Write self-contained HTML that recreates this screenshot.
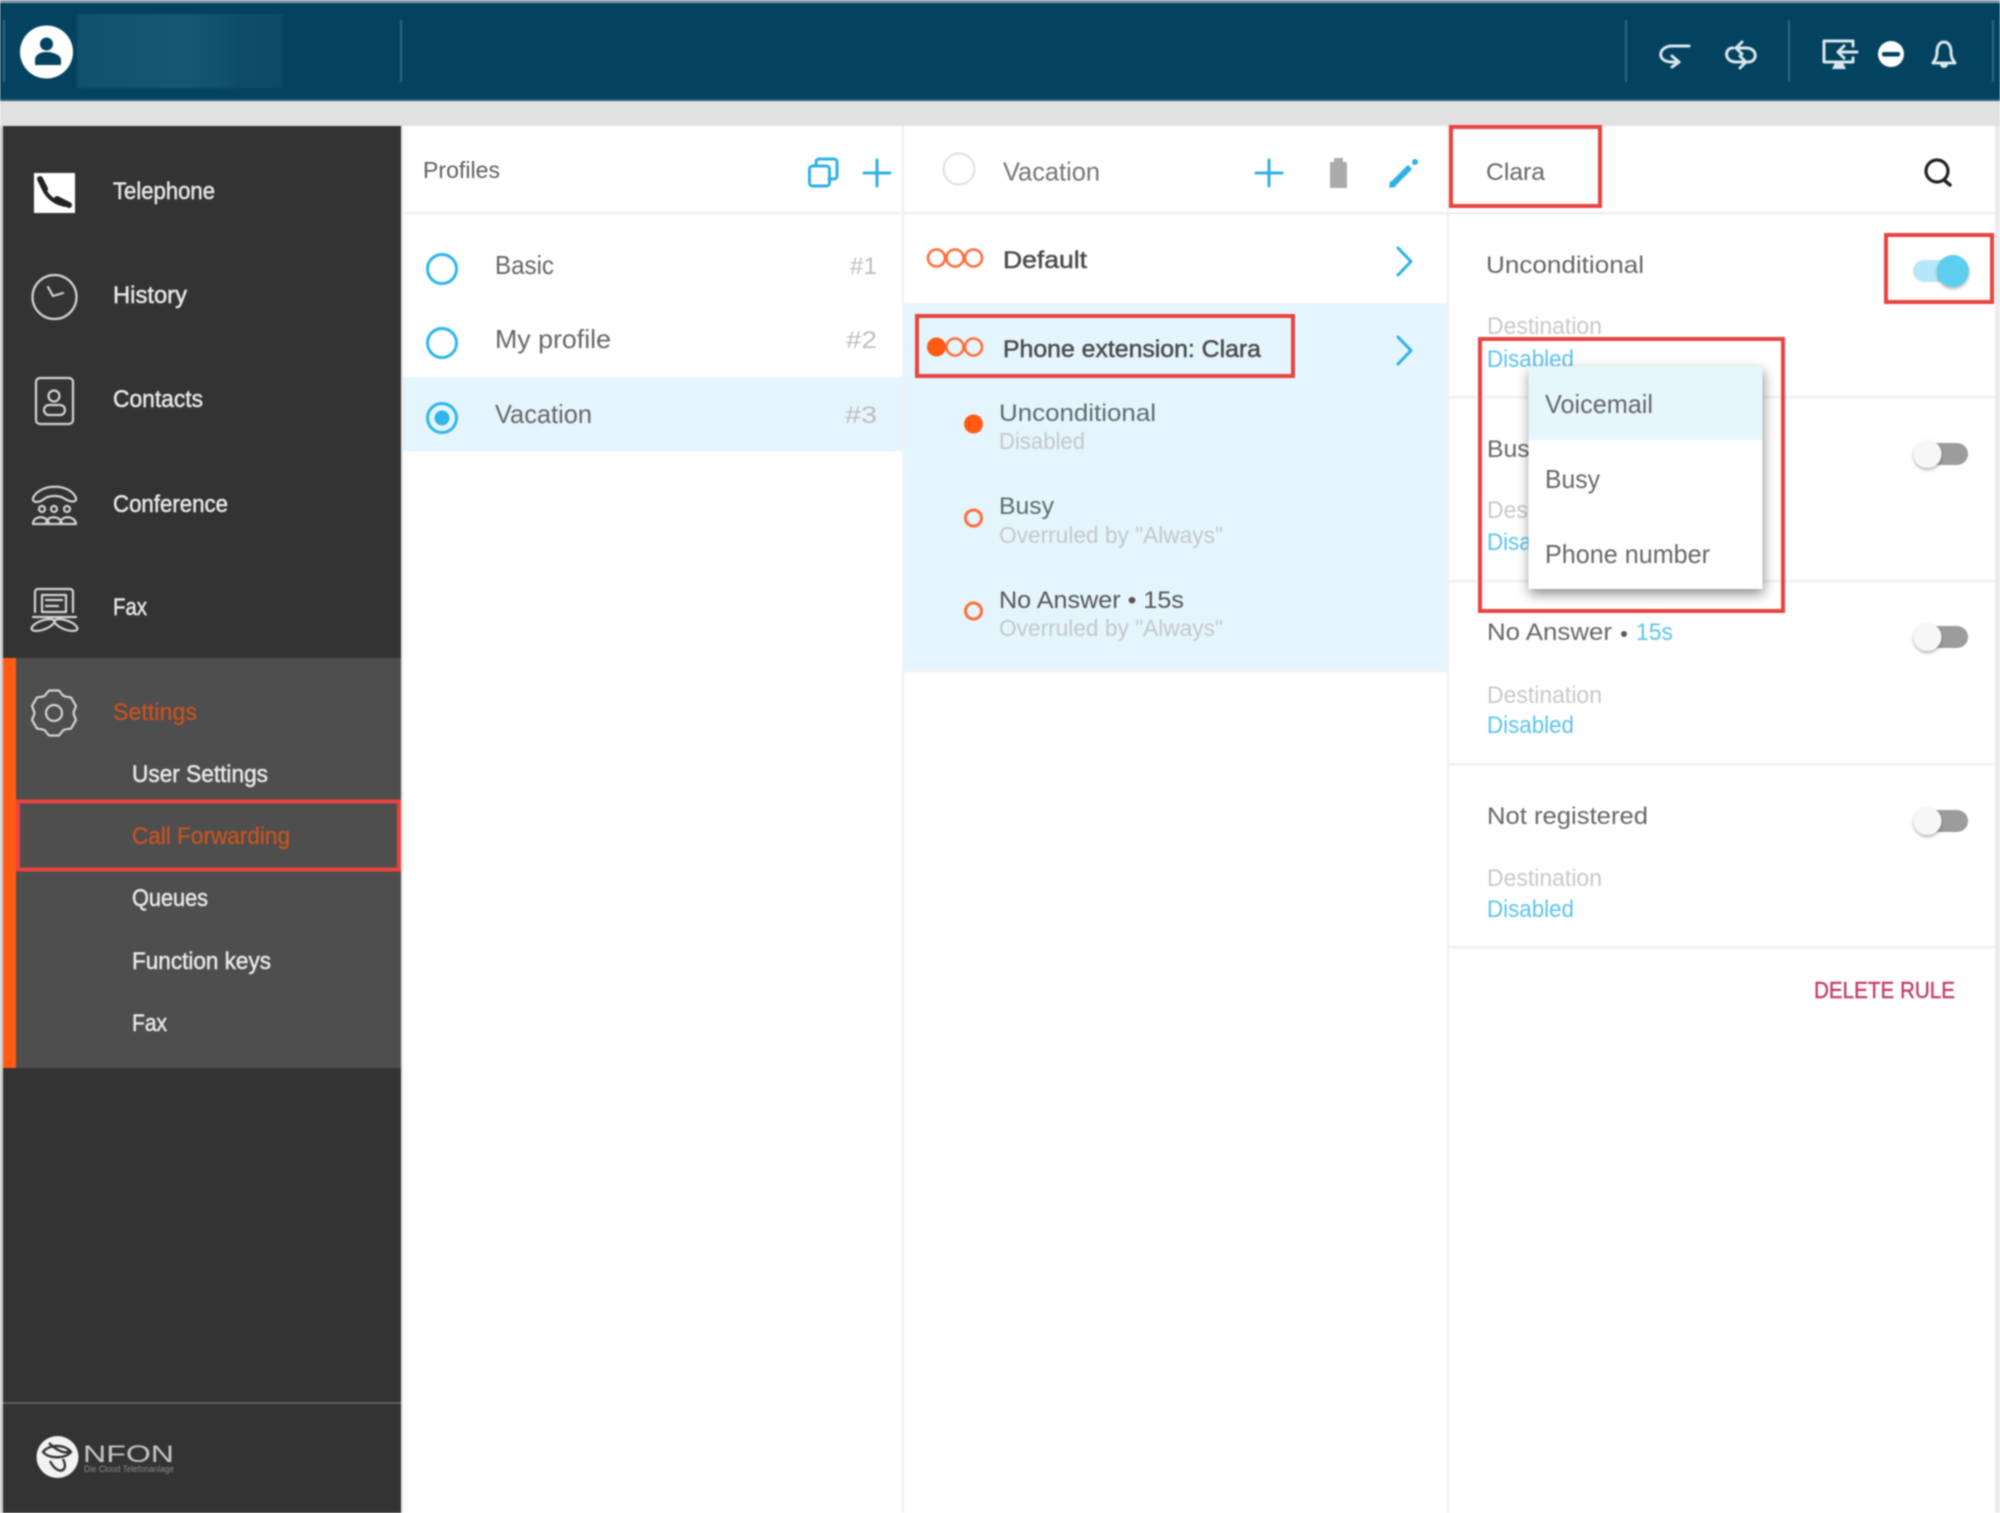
<!DOCTYPE html>
<html lang="en"><head><meta charset="utf-8"><title>Call Forwarding</title>
<style>
html,body{margin:0;padding:0;width:2000px;height:1513px;overflow:hidden;background:#fff}
svg{display:block;filter:blur(.8px)}
text{font-family:"Liberation Sans",sans-serif;font-size:24.500px;fill:#666}
.n{fill:#e8e8e8;stroke:#e8e8e8;stroke-width:.5px}
.o{fill:#c9531f;stroke:#c9531f;stroke-width:.3px}
.s{font-size:23.500px;fill:#c3c8ca}
.g{fill:#bdbdbd}
.b{fill:#5bc3ec}
.k{fill:#4a4a4a;stroke:#4a4a4a;stroke-width:.5px}
.ic{fill:none;stroke:#d4d4d4;stroke-width:2.2;stroke-linecap:round;stroke-linejoin:round}
.hd{fill:none;stroke:#d9e6ec;stroke-width:3;stroke-linecap:round;stroke-linejoin:round}
.bl{fill:none;stroke:#2fb0e6;stroke-width:3;stroke-linecap:round;stroke-linejoin:round}
.or{fill:none;stroke:#ff6d3a;stroke-width:2.6}
.red{fill:none;stroke:#e8433f;stroke-width:4}
.ln{fill:#f0f0f0}
</style></head><body>
<svg width="2000" height="1513" viewBox="0 0 2000 1513" xmlns="http://www.w3.org/2000/svg">
<defs>
<linearGradient id="bg" x1="0" x2="1" y1="0" y2="0"><stop offset="0" stop-color="#0f506b"/><stop offset=".1" stop-color="#12536d"/><stop offset=".55" stop-color="#155771"/><stop offset=".8" stop-color="#0c4c66"/><stop offset="1" stop-color="#0a4a64"/></linearGradient>
<filter id="ms" x="-20%" y="-20%" width="140%" height="140%"><feDropShadow dx="1" dy="5" stdDeviation="6" flood-color="#000" flood-opacity=".45"/></filter>
<filter id="ks" x="-50%" y="-50%" width="200%" height="200%"><feDropShadow dx="0" dy="2" stdDeviation="1.5" flood-color="#000" flood-opacity=".3"/></filter>
</defs>
<rect width="2000" height="1513" fill="#fff"/>
<!-- top bar -->
<rect width="2000" height="101" fill="#04435f"/>
<rect width="2000" height="3" fill="#7f9aa8"/>
<rect y="99" width="2000" height="2" fill="#2a6078"/>
<rect y="101" width="2000" height="25" fill="#e1e1e1"/>
<rect x="3" y="20" width="2" height="62" fill="#2d6780"/>
<rect x="400" y="20" width="2" height="62" fill="#2d6780"/>
<rect x="1625" y="20" width="2" height="62" fill="#2d6780"/>
<rect x="1788" y="20" width="2" height="62" fill="#2d6780"/>
<rect x="1992" y="20" width="2" height="62" fill="#2d6780"/>
<rect x="77" y="14" width="206" height="74" fill="url(#bg)"/>
<circle cx="46.500" cy="52" r="26.500" fill="#fff"/>
<circle cx="46.500" cy="44" r="6.500" fill="#04435f"/>
<path d="M35 65v-5c0-5 5-8 11.500-8s14.500 3 14.500 8v5z" fill="#04435f"/>
<path class="hd" d="M1689 46H1672C1658 46 1656 62 1672 62H1679M1672 56L1679 62L1672 67"/>
<path class="hd" d="M1736 48H1746C1758 48 1758 62 1748 62M1746 62H1736C1724 62 1724 48 1733 48M1742 42L1736 48L1742 54M1740 56L1746 62L1740 68"/>
<path class="hd" d="M1853 46V41H1824V62H1853V58M1857 52H1838M1844 46L1838 52L1844 58"/>
<path d="M1832 69h14l-3-6h-8z" fill="#d9e6ec"/>
<circle cx="1891" cy="54" r="13" fill="#fff"/>
<rect x="1882" y="52" width="18" height="4.500" rx="2" fill="#04435f"/>
<path d="M1944 42c-5 0-7 5-7 10c0 6-2 8-4 11h22c-2-3-4-5-4-11c0-5-2-10-7-10z" class="hd"/>
<path d="M1940 64a4 4 0 0 0 8 0z" fill="#d9e6ec"/>

<!-- right strip, left strip -->
<rect x="1995" y="126" width="5" height="1387" fill="#ececec"/>
<rect x="0" y="126" width="3" height="1387" fill="#cfcfcf"/>
<!-- sidebar -->
<rect x="3" y="126" width="398" height="1387" fill="#333"/>
<rect x="401" y="126" width="2" height="1387" fill="#e6e6e6"/>
<rect x="3" y="658" width="398" height="410" fill="#4e4e4e"/>
<rect x="3" y="658" width="13" height="410" fill="#ff5a14"/>
<rect x="3" y="1402" width="398" height="2" fill="#5f5f5f"/>

<rect x="34" y="173" width="41" height="40" fill="#fff"/>
<path d="M42 180C42 192 52 203 66 205" fill="none" stroke="#222" stroke-width="4"/>
<path d="M40 179L45 189M57 199L69 205" fill="none" stroke="#222" stroke-width="6" stroke-linecap="round"/>
<text class="n" x="113" y="199" textLength="102" lengthAdjust="spacingAndGlyphs">Telephone</text>

<circle class="ic" cx="54.500" cy="297" r="22"/>
<path class="ic" d="M48 287L53 296L63 293"/>
<text class="n" x="113" y="303" textLength="74" lengthAdjust="spacingAndGlyphs">History</text>

<rect class="ic" x="36" y="378" width="37" height="46" rx="4"/>
<circle class="ic" cx="54" cy="396" r="5.500"/>
<rect class="ic" x="44" y="405" width="21" height="10" rx="5"/>
<text class="n" x="113" y="407" textLength="90" lengthAdjust="spacingAndGlyphs">Contacts</text>

<path class="ic" d="M33 498C40 483 70 483 76 498C77 503 70 502 65 499C60 495 49 495 44 499C39 503 32 503 33 498Z"/>
<circle class="ic" cx="42" cy="509" r="3"/><circle class="ic" cx="54" cy="509" r="3"/><circle class="ic" cx="67" cy="509" r="3"/>
<path class="ic" d="M33 524c0-9 15-9 16 0zM46 524c0-9 15-9 16 0zM60 524c0-9 15-9 16 0z"/>
<text class="n" x="113" y="512" textLength="115" lengthAdjust="spacingAndGlyphs">Conference</text>

<path class="ic" d="M35 612V592a3 3 0 0 1 3-3H70a3 3 0 0 1 3 3V612M42 612H66V595H42ZM46 600H62M46 606H58M33 617H76"/>
<ellipse class="ic" cx="43" cy="625" rx="12" ry="4.500" transform="rotate(-20 43 625)"/>
<ellipse class="ic" cx="66" cy="625" rx="12" ry="4.500" transform="rotate(20 66 625)"/>
<text class="n" x="113" y="615" textLength="34" lengthAdjust="spacingAndGlyphs">Fax</text>

<g transform="translate(54 713)">
<polygon class="ic" points="-9,-17.500 -5,-22.500 5,-22.500 9,-17.500 10.660,-16.540 16.990,-15.580 21.990,-6.920 19.660,-0.960 19.650,0.960 21.990,6.920 16.990,15.580 10.660,16.550 9,17.500 5,22.500 -5,22.500 -9,17.500 -10.660,16.540 -16.990,15.580 -21.990,6.920 -19.660,0.960 -19.650,-0.960 -21.990,-6.920 -16.990,-15.580 -10.660,-16.550"/>
<circle class="ic" r="8"/>
</g>
<text class="o" x="113" y="720" textLength="84" lengthAdjust="spacingAndGlyphs">Settings</text>
<text class="n" x="132" y="782" textLength="136" lengthAdjust="spacingAndGlyphs">User Settings</text>
<rect class="red" x="18" y="801.500" width="381" height="68"/>
<text class="o" x="132" y="844" textLength="158" lengthAdjust="spacingAndGlyphs">Call Forwarding</text>
<text class="n" x="132" y="906" textLength="76" lengthAdjust="spacingAndGlyphs">Queues</text>
<text class="n" x="132" y="969" textLength="139" lengthAdjust="spacingAndGlyphs">Function keys</text>
<text class="n" x="132" y="1031" textLength="35" lengthAdjust="spacingAndGlyphs">Fax</text>

<circle cx="57.500" cy="1457" r="21" fill="#f2f2f2"/>
<path d="M43 1452c6-8 22-8 28 0c-6 7-22 7-28 0zM49 1443c6 6 16 12 20 8M50 1461c4 8 10 12 14 8c2-3 0-8-1-10" fill="none" stroke="#333" stroke-width="2.400"/>
<text x="83" y="1462" textLength="91" lengthAdjust="spacingAndGlyphs" style="font-size:24px;fill:#c4c4c4">NFON</text>
<text x="84" y="1472" textLength="90" lengthAdjust="spacingAndGlyphs" style="font-size:9px;fill:#8a8a8a">Die Cloud Telefonanlage</text>

<!-- column dividers -->
<rect x="403" y="212" width="1592" height="2.500" class="ln"/>
<rect x="902" y="126" width="2" height="1387" class="ln"/>
<rect x="1447" y="126" width="2" height="1387" class="ln"/>

<!-- Profiles -->
<text x="423" y="178" textLength="77" lengthAdjust="spacingAndGlyphs" style="font-size:23.500px;fill:#5e5e5e">Profiles</text>
<path class="bl" d="M816 165V162a3 3 0 0 1 3-3H834a3 3 0 0 1 3 3V176a3 3 0 0 1-3 3H829"/>
<rect class="bl" x="809.500" y="166" width="20" height="20" rx="3"/>
<path class="bl" d="M877 160V186M864 173H890"/>
<rect x="403" y="377" width="499" height="74" fill="#e4f5fd"/>
<circle cx="442" cy="269" r="14.500" fill="none" stroke="#2fb6ea" stroke-width="3"/>
<circle cx="442" cy="343" r="14.500" fill="none" stroke="#2fb6ea" stroke-width="3"/>
<circle cx="442" cy="418" r="14.500" fill="none" stroke="#2fb6ea" stroke-width="3"/>
<circle cx="442" cy="418" r="7.500" fill="#2fb6ea"/>
<text x="495" y="274" textLength="59" lengthAdjust="spacingAndGlyphs" style="font-size:26px">Basic</text>
<text x="495" y="348" textLength="116" lengthAdjust="spacingAndGlyphs" style="font-size:26px">My profile</text>
<text x="495" y="423" textLength="97" lengthAdjust="spacingAndGlyphs" style="font-size:26px">Vacation</text>
<text class="g" x="850" y="274" textLength="27" lengthAdjust="spacingAndGlyphs">#1</text>
<text class="g" x="846" y="348" textLength="31" lengthAdjust="spacingAndGlyphs">#2</text>
<text class="g" x="845" y="423" textLength="32" lengthAdjust="spacingAndGlyphs">#3</text>

<!-- Rules column -->
<circle cx="959" cy="169" r="15.500" fill="none" stroke="#e6e6e6" stroke-width="2.500"/>
<text x="1003" y="180.500" textLength="97" lengthAdjust="spacingAndGlyphs" style="font-size:26px;fill:#747474">Vacation</text>
<path class="bl" d="M1269 160V186M1256 173H1282"/>
<rect x="1330" y="162" width="17" height="26" rx="1" fill="#ababab"/>
<rect x="1334" y="158" width="9" height="5" fill="#ababab"/>
<path d="M1392 185L1410 167" fill="none" stroke="#2fb0e6" stroke-width="6"/>
<path d="M1389 188l1-7l6 6z" fill="#2fb0e6"/>
<circle cx="1415" cy="162" r="3" fill="#2fb0e6"/>

<rect x="904" y="303" width="543" height="367" fill="#e4f5fd"/>
<rect x="904" y="670" width="543" height="2" fill="#f0f0f0"/>
<g class="or"><circle cx="936.500" cy="258" r="8.500"/><circle cx="955" cy="258" r="8.500"/><circle cx="973.500" cy="258" r="8.500"/></g>
<text class="k" x="1003" y="268" textLength="84" lengthAdjust="spacingAndGlyphs">Default</text>
<path class="bl" d="M1398 248L1411 261.500L1398 275"/>

<g class="or"><circle cx="955" cy="347" r="8.500"/><circle cx="973.500" cy="347" r="8.500"/></g>
<circle cx="936.500" cy="347" r="9.500" fill="#ff5a14"/>
<text class="k" x="1003" y="357" textLength="258" lengthAdjust="spacingAndGlyphs">Phone extension: Clara</text>
<path class="bl" d="M1398 337L1411 350.500L1398 364"/>
<rect class="red" x="917" y="316" width="376" height="60"/>

<circle cx="973.500" cy="424" r="9.500" fill="#ff5a14"/>
<text x="999" y="421" textLength="157" lengthAdjust="spacingAndGlyphs" style="fill:#5f6a70">Unconditional</text>
<text class="s" x="999" y="449" textLength="86" lengthAdjust="spacingAndGlyphs">Disabled</text>
<circle cx="973.500" cy="518" r="8" class="or" style="stroke-width:3"/>
<text x="999" y="514" textLength="55" lengthAdjust="spacingAndGlyphs" style="fill:#5f6a70">Busy</text>
<text class="s" x="999" y="543" textLength="224" lengthAdjust="spacingAndGlyphs">Overruled by "Always"</text>
<circle cx="973.500" cy="611" r="8" class="or" style="stroke-width:3"/>
<text x="999" y="608" textLength="185" lengthAdjust="spacingAndGlyphs" style="fill:#555">No Answer • 15s</text>
<text class="s" x="999" y="636" textLength="224" lengthAdjust="spacingAndGlyphs">Overruled by "Always"</text>

<!-- Details column -->
<text x="1486" y="180" textLength="59" lengthAdjust="spacingAndGlyphs">Clara</text>
<rect class="red" x="1451" y="127" width="149" height="79"/>
<circle cx="1937" cy="171" r="11" fill="none" stroke="#222" stroke-width="3.200"/>
<path d="M1944 180L1950 185" fill="none" stroke="#222" stroke-width="3.500" stroke-linecap="round"/>

<text x="1486" y="273" textLength="158" lengthAdjust="spacingAndGlyphs">Unconditional</text>
<rect class="red" x="1886" y="235" width="106" height="67"/>
<rect x="1913" y="260" width="46" height="22" rx="11" fill="#b5e7f8"/>
<circle cx="1953" cy="271" r="16" fill="#5dcdf0" filter="url(#ks)"/>
<text class="g" x="1487" y="334" textLength="115" lengthAdjust="spacingAndGlyphs" style="fill:#c8c8c8">Destination</text>
<text class="b" x="1487" y="367" textLength="87" lengthAdjust="spacingAndGlyphs">Disabled</text>
<rect x="1449" y="396" width="546" height="2.500" class="ln"/>

<text x="1487" y="457" textLength="55" lengthAdjust="spacingAndGlyphs">Busy</text>
<rect x="1915" y="443" width="53" height="22" rx="11" fill="#9c9c9c"/>
<circle cx="1927.500" cy="454" r="14" fill="#f7f7f7" filter="url(#ks)"/>
<text x="1487" y="518" textLength="115" lengthAdjust="spacingAndGlyphs" style="fill:#c8c8c8">Destination</text>
<text class="b" x="1487" y="550" textLength="87" lengthAdjust="spacingAndGlyphs">Disabled</text>
<rect x="1449" y="580" width="546" height="2.500" class="ln"/>

<text x="1487" y="640" textLength="125" lengthAdjust="spacingAndGlyphs">No Answer</text>
<circle cx="1624" cy="634" r="3" fill="#555"/>
<text class="b" x="1636" y="640" textLength="37" lengthAdjust="spacingAndGlyphs">15s</text>
<rect x="1915" y="626" width="53" height="22" rx="11" fill="#9c9c9c"/>
<circle cx="1927.500" cy="637" r="14" fill="#f7f7f7" filter="url(#ks)"/>
<text x="1487" y="703" textLength="115" lengthAdjust="spacingAndGlyphs" style="fill:#c8c8c8">Destination</text>
<text class="b" x="1487" y="733" textLength="87" lengthAdjust="spacingAndGlyphs">Disabled</text>
<rect x="1449" y="763" width="546" height="2.500" class="ln"/>

<text x="1487" y="824" textLength="161" lengthAdjust="spacingAndGlyphs">Not registered</text>
<rect x="1915" y="810" width="53" height="22" rx="11" fill="#9c9c9c"/>
<circle cx="1927.500" cy="821" r="14" fill="#f7f7f7" filter="url(#ks)"/>
<text x="1487" y="886" textLength="115" lengthAdjust="spacingAndGlyphs" style="fill:#c8c8c8">Destination</text>
<text class="b" x="1487" y="917" textLength="87" lengthAdjust="spacingAndGlyphs">Disabled</text>
<rect x="1449" y="946" width="546" height="2.500" class="ln"/>

<text x="1814" y="998" textLength="141" lengthAdjust="spacingAndGlyphs" style="font-size:23px;fill:#c23a68;stroke:#c23a68;stroke-width:.4px">DELETE RULE</text>

<!-- dropdown menu -->
<rect x="1528.500" y="366" width="234" height="223" fill="#fff" filter="url(#ms)"/>
<rect x="1528.500" y="366" width="234" height="74" fill="#e6f6fd"/>
<text x="1545" y="413" textLength="108" lengthAdjust="spacingAndGlyphs" style="font-size:26px">Voicemail</text>
<text x="1545" y="488" textLength="55" lengthAdjust="spacingAndGlyphs" style="font-size:26px">Busy</text>
<text x="1545" y="563" textLength="165" lengthAdjust="spacingAndGlyphs" style="font-size:26px">Phone number</text>
<rect class="red" x="1480" y="339" width="303" height="272"/>
</svg>
</body></html>
